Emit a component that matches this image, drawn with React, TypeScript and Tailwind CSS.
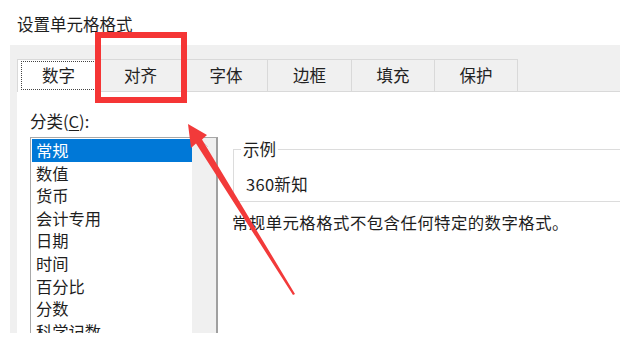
import React from 'react';

const tabs = [
  { label: '数字', w: 'w-[80px]' },
  { label: '对齐', w: 'w-[88px]' },
  { label: '字体', w: 'w-[83px]' },
  { label: '边框', w: 'w-[84px]' },
  { label: '填充', w: 'w-[83px]' },
  { label: '保护', w: 'w-[83px]' },
];

const categories = ['常规', '数值', '货币', '会计专用', '日期', '时间', '百分比', '分数', '科学记数', '文本'];

const App: React.FC = () => {
  return (
    <div
      className="relative w-[620px] h-[340px] overflow-hidden bg-white text-[#1e1e1e]"
      style={{ fontFamily: '"Noto Sans CJK SC", "Noto Sans", sans-serif' }}
    >
      {/* Dialog title */}
      <div className="pt-[13px] pl-[17px] text-[16.5px] leading-[22px]">设置单元格格式</div>

      {/* Dialog body */}
      <div className="mt-[10px] ml-[10px] h-[288px] bg-[#f0f0f0] pt-[14px] pl-[7px] flex flex-col overflow-hidden">
        {/* Tabs */}
        <div className="flex h-[33px] shrink-0">
          {tabs.map((t, i) =>
            i === 0 ? (
              <div key={t.label} className={`${t.w} shrink-0 bg-white border-t border-l border-r border-[#d9d9d9] pt-[1px] pl-[3px] pb-[2px]`}>
                <div className="h-full border border-dotted border-[#444] flex items-center justify-center text-[16.5px]">
                  {t.label}
                </div>
              </div>
            ) : (
              <div
                key={t.label}
                className={`${t.w} shrink-0 border-t border-r border-b border-[#d9d9d9] flex items-center justify-center text-[16.5px] text-[#222]`}
              >
                {t.label}
              </div>
            )
          )}
          <div className="flex-1 border-b border-[#d9d9d9]" />
        </div>

        {/* Tab page */}
        <div className="flex-1 bg-white pl-[13px] pt-[19px]">
          <div className="text-[16.5px] leading-[20px]">
            分类(<span className="underline underline-offset-2">C</span>):
          </div>
          <div className="flex mt-[6px]">
            {/* Category list */}
            <div className="w-[188px] shrink-0 h-[220px] flex border border-[#a8a8a8] border-r-[2px] border-r-[#a0a0a0]">
              <div className="flex-1 pt-[1px] pl-[1px]">
                {categories.map((c, i) => (
                  <div
                    key={c}
                    className={`h-[22.6px] leading-[22.6px] pl-[4px] text-[16.3px] ${
                      i === 0 ? 'bg-[#0078d7] text-white' : ''
                    }`}
                  >
                    {c}
                  </div>
                ))}
              </div>
              <div className="w-[24px] shrink-0 bg-[#f0f0f0] flex justify-center pt-[4px]">
                <svg width="9" height="6" viewBox="0 0 9 6">
                  <path d="M1 5 L4.5 1.5 L8 5" fill="none" stroke="#d0d0d0" strokeWidth="1" />
                </svg>
              </div>
            </div>

            {/* Sample + description */}
            <div className="ml-[14px] flex flex-col pt-[3px] shrink-0">
              <fieldset className="ml-[1px] w-[420px] h-[62px] border border-[#dcdcdc] px-[12px]">
                <legend className="ml-[-5px] px-[2px] text-[16.5px] leading-[18px]">示例</legend>
                <div className="mt-[15px] text-[16.5px] leading-[22px] tracking-[0.3px]">360新知</div>
              </fieldset>
              <div className="mt-[9px] text-[16.4px] leading-[22px] tracking-[0.45px] whitespace-nowrap">
                常规单元格格式不包含任何特定的数字格式。
              </div>
            </div>
          </div>
        </div>
      </div>

      {/* Annotation: red box and arrow */}
      <svg className="absolute inset-0 pointer-events-none" width="620" height="340" viewBox="0 0 620 340">
        <rect x="98" y="35" width="86" height="65" fill="none" stroke="#f53535" strokeWidth="6" />
        <polygon
          points="188,124 207,135 202,139.6 295,294 293,295 196,143.4 191,148"
          fill="#f23a3a"
        />
      </svg>
    </div>
  );
};

export default App;
